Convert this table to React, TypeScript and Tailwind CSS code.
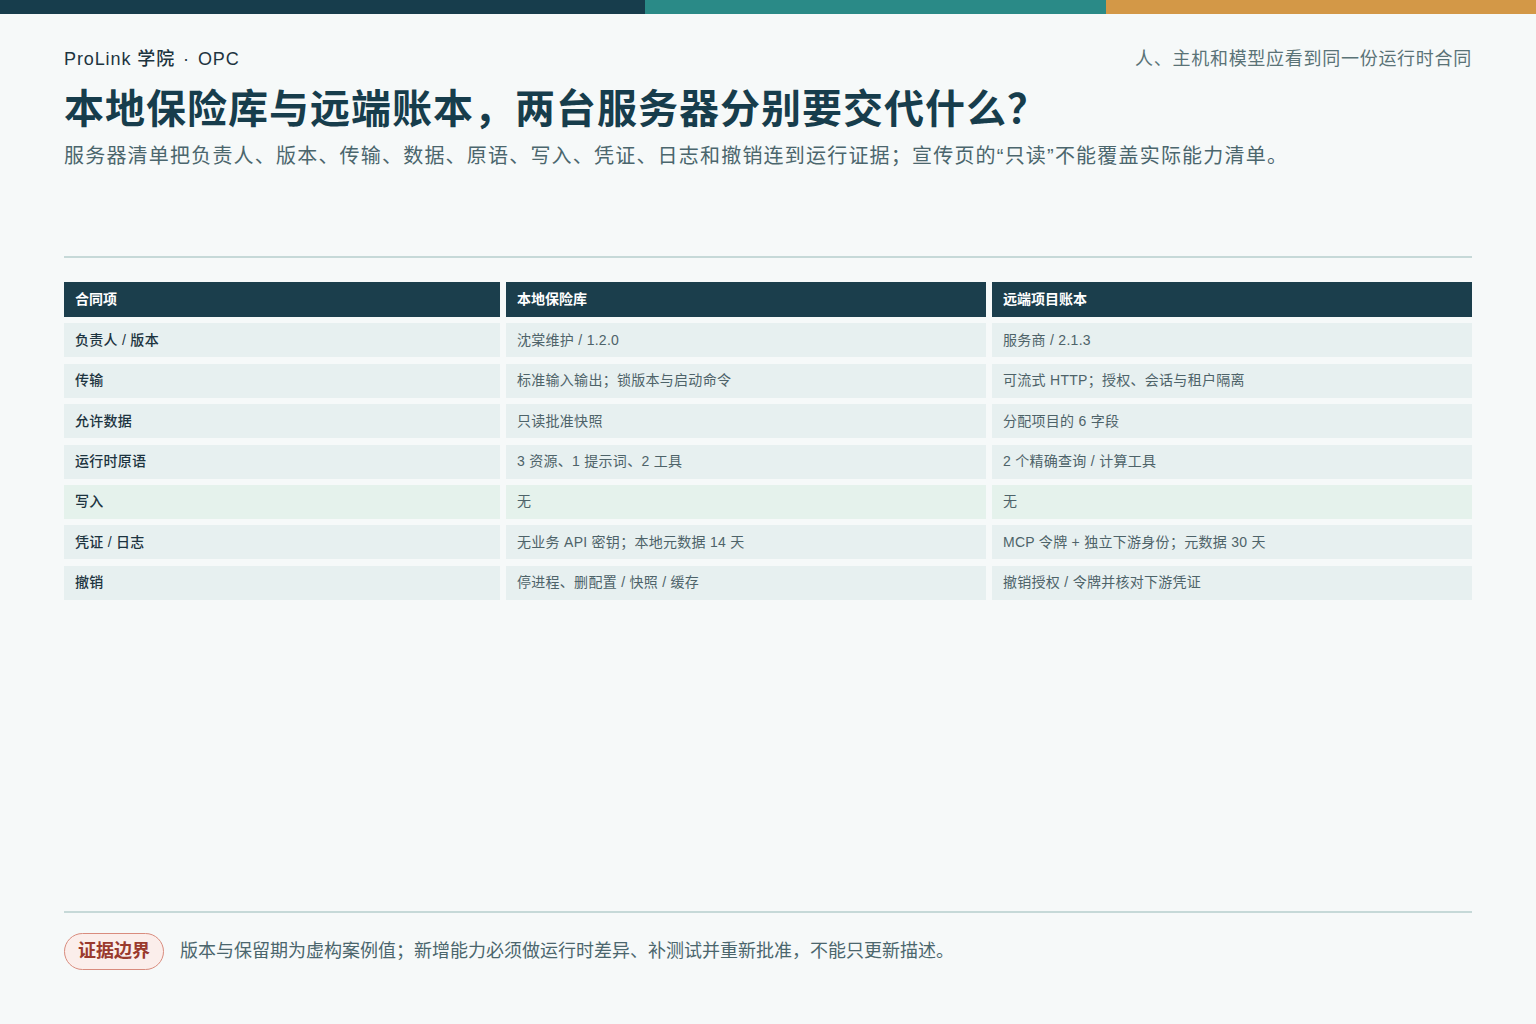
const FONT = '"Liberation Sans", "Noto Sans CJK SC", sans-serif'

type Row = {
  label: string
  local: string
  remote: string
  tone?: "green"
}

const rows: Row[] = [
  { label: "负责人 / 版本", local: "沈棠维护 / 1.2.0", remote: "服务商 / 2.1.3" },
  { label: "传输", local: "标准输入输出；锁版本与启动命令", remote: "可流式 HTTP；授权、会话与租户隔离" },
  { label: "允许数据", local: "只读批准快照", remote: "分配项目的 6 字段" },
  { label: "运行时原语", local: "3 资源、1 提示词、2 工具", remote: "2 个精确查询 / 计算工具" },
  { label: "写入", local: "无", remote: "无", tone: "green" },
  { label: "凭证 / 日志", local: "无业务 API 密钥；本地元数据 14 天", remote: "MCP 令牌 + 独立下游身份；元数据 30 天" },
  { label: "撤销", local: "停进程、删配置 / 快照 / 缓存", remote: "撤销授权 / 令牌并核对下游凭证" },
]

function Cell({ children, strong, tone }: { children: React.ReactNode; strong?: boolean; tone?: "green" }) {
  return (
    <div
      className={`flex h-[34px] items-center px-[11px] text-[14px] tracking-[0.02em] ${
        tone === "green" ? "bg-[#e5f2ec]" : "bg-[#e7f0f0]"
      } ${strong ? "font-medium text-[#1d3440]" : "text-[#4e6369]"}`}
    >
      {children}
    </div>
  )
}

function HeadCell({ children }: { children: React.ReactNode }) {
  return (
    <div className="flex h-[35px] items-center bg-[#1b3e4c] px-[11px] text-[14px] font-bold text-white">
      {children}
    </div>
  )
}

export default function App() {
  return (
    <div className="flex h-[1024px] w-full flex-col bg-[#f6f9f9]" style={{ fontFamily: FONT }}>
      <div className="flex h-[14px] w-full">
        <div className="w-[645px] bg-[#173d4c]" />
        <div className="w-[461px] bg-[#2a8a87]" />
        <div className="flex-1 bg-[#d39847]" />
      </div>

      <div className="flex flex-1 flex-col px-16 pt-[33px] pb-[54px]">
        <div className="flex h-[24px] items-center justify-between text-[18px] leading-[24px]">
          <span className="font-medium tracking-[0.05em] text-[#1d3440]">
            ProLink 学院<span className="mx-[8px]">·</span>OPC
          </span>
          <span className="tracking-[0.04em] text-[#5a7377]">人、主机和模型应看到同一份运行时合同</span>
        </div>

        <h1 className="mt-[10px] text-[40px] leading-[56px] font-bold tracking-[0.025em] text-[#173d4c]">
          本地保险库与远端账本，两台服务器分别要交代什么？
        </h1>
        <p className="mt-[5px] text-[20px] leading-[28px] tracking-[0.06em] text-[#4b666d]">
          服务器清单把负责人、版本、传输、数据、原语、写入、凭证、日志和撤销连到运行证据；宣传页的“只读”不能覆盖实际能力清单。
        </p>

        <div className="mt-[86px] border-t-2 border-[#c6d9d8]" />

        <div className="mt-[24px] grid grid-cols-[436px_480px_480px] gap-x-[6px] gap-y-[6.4px]">
          <HeadCell>合同项</HeadCell>
          <HeadCell>本地保险库</HeadCell>
          <HeadCell>远端项目账本</HeadCell>
          {rows.map((r) => (
            <div key={r.label} className="contents">
              <Cell strong tone={r.tone}>{r.label}</Cell>
              <Cell tone={r.tone}>{r.local}</Cell>
              <Cell tone={r.tone}>{r.remote}</Cell>
            </div>
          ))}
        </div>

        <div className="mt-auto border-t-2 border-[#c6d9d8]" />
        <div className="mt-[20px] flex items-center gap-[16px]">
          <span className="flex h-[37px] items-center rounded-full border border-[#d98c7e] bg-[#fbeeeb] px-[13px] text-[18px] font-bold text-[#9a3a2d]">
            证据边界
          </span>
          <span className="text-[18px] text-[#4b666d]">
            版本与保留期为虚构案例值；新增能力必须做运行时差异、补测试并重新批准，不能只更新描述。
          </span>
        </div>
      </div>
    </div>
  )
}
